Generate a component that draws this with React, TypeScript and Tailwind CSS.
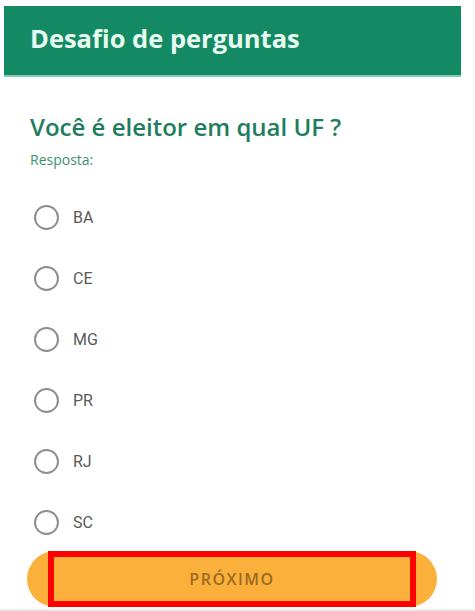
import React from "react";

const options = ["BA", "CE", "MG", "PR", "RJ", "SC"];

export default function App() {
  return (
    <div className="w-[475px] h-[611px] bg-white overflow-hidden relative" style={{ fontFamily: "'Open Sans', sans-serif" }}>
      <div className="pt-[6px]">
        <div className="mx-[4px] w-[457px] h-[71px] bg-[#138a63] border-b-[2px] border-[#7fcfb2] flex items-center pl-[26px]">
          <h1 className="text-[25.5px] font-bold text-[#e8fbf1] leading-none pb-[4px]">Desafio de perguntas</h1>
        </div>
      </div>
      <div className="pl-[30px] pt-[34px]">
        <h2 className="text-[24px] font-semibold text-[#1e7d5e] leading-[32px]">Você é eleitor em qual UF ?</h2>
        <p className="text-[14px] text-[#3d8f71] leading-[18px] mt-[8px]">Resposta:</p>
      </div>
      <div className="pl-[34px] mt-[18px]">
        {options.map((o) => (
          <div key={o} className="h-[61px] flex items-center">
            <span className="w-[25px] h-[25px] rounded-full border-[2.5px] border-[#8e8e8e] box-border" />
            <span className="ml-[14px] text-[16px] text-[#595959]" style={{ fontFamily: "Roboto, sans-serif" }}>{o}</span>
          </div>
        ))}
      </div>
      <div className="ml-[27px] mt-[-2px] w-[410px] h-[56px] rounded-full bg-[#fbb03c] relative flex items-center justify-center">
        <span className="text-[16px] font-semibold tracking-[1.5px] text-[#9c6a22]">PRÓXIMO</span>
        <div className="absolute left-[21px] top-0 w-[368px] h-[56px] border-[6px] border-[#ff0000]" />
      </div>
      <div className="absolute left-0 bottom-0 w-full h-[2px] bg-[#ececec]" />
    </div>
  );
}
